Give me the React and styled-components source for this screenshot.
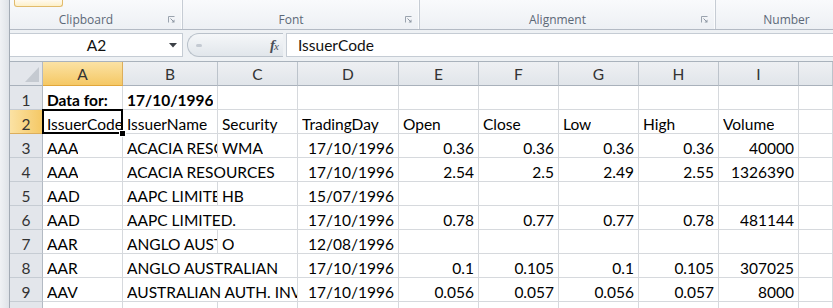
import React from "react";
import styled, { createGlobalStyle } from "styled-components";

const GlobalStyle = createGlobalStyle`
  html, body { margin: 0; padding: 0; background: #fff; }
  body { font-family: Lato, "Liberation Sans", sans-serif; }
`;

const Window = styled.div`
  width: 833px;
  height: 308px;
  overflow: hidden;
  display: flex;
  background: #e9ecf0;
`;

const Edge = styled.div`
  width: 9px;
  flex: none;
  background: linear-gradient(to right, #f0f2f5, #dfe3e8);
  border-right: 1px solid #a3abb5;
`;

const Main = styled.div`
  flex: 1;
  min-width: 0;
  display: flex;
  flex-direction: column;
`;

/* ribbon */
const Ribbon = styled.div`
  flex: none;
  height: 30px;
  box-sizing: border-box;
  display: flex;
  background: linear-gradient(#f9fafc, #edf0f4);
  border-bottom: 1px solid #b3bac4;
`;

const Group = styled.div`
  width: ${(p) => p.$w}px;
  flex: none;
  box-sizing: border-box;
  display: flex;
  flex-direction: column;
  border-right: 1px solid #c6ccd4;
  box-shadow: inset -1px 0 0 #fbfcfd;
`;

const GroupBody = styled.div`
  flex: 1;
  padding-left: 4px;
`;

const PasteTail = styled.div`
  width: 49px;
  height: 7px;
  box-sizing: border-box;
  border: 1px solid #e2bb6c;
  border-top: none;
  border-radius: 0 0 3px 3px;
  background: linear-gradient(#fffaf0, #fdf0c9);
`;

const LabelRow = styled.div`
  height: 16px;
  margin-bottom: 2px;
  display: flex;
  align-items: center;
`;

const GroupLabel = styled.div`
  flex: 1;
  text-align: center;
  font: 12px "Open Sans", sans-serif;
  color: #5c6877;
`;

const LauncherBox = styled.div`
  width: 20px;
  display: flex;
  justify-content: flex-end;
  padding-right: 7px;
  box-sizing: border-box;
`;

const Launcher = () => (
  <LauncherBox>
    <svg width="7" height="7" viewBox="0 0 7 7">
      <path d="M0.5 6.5V0.5H6.5" fill="none" stroke="#9aa3ae" />
      <path d="M2.5 2.5L5.5 5.5" stroke="#8d97a3" />
      <path d="M6.5 3.5V6.5H3.5Z" fill="#8d97a3" />
    </svg>
  </LauncherBox>
);

/* formula bar */
const FormulaBar = styled.div`
  flex: none;
  height: 32px;
  box-sizing: border-box;
  padding: 3px 0 4px;
  display: flex;
  background: #eef1f4;
  border-bottom: 1px solid #a9b2bc;
`;

const NameBox = styled.div`
  width: 173px;
  box-sizing: border-box;
  display: flex;
  align-items: center;
  background: #fff;
  border: 1px solid #c5ccd4;
  border-left: none;
`;

const NameText = styled.div`
  flex: 1;
  text-align: center;
  padding-left: 14px;
  font-size: 15.5px;
  color: #111;
`;

const DropArrow = styled.svg`
  margin-right: 5px;
`;

const Pill = styled.div`
  width: 96px;
  margin-left: 4px;
  box-sizing: border-box;
  display: flex;
  align-items: center;
  justify-content: space-between;
  padding: 0 5px 0 8px;
  border: 1px solid #b9c1ca;
  border-right: none;
  border-radius: 12px 0 0 12px;
  background: linear-gradient(#f5f7f9, #e1e6eb);
`;

const Handle = styled.span`
  width: 6px;
  height: 3px;
  border-radius: 2px;
  background: #c4cad2;
`;

const Fx = styled.span`
  font-family: "Liberation Serif", serif;
  font-style: italic;
  font-weight: bold;
  font-size: 15px;
  color: #4a4f57;
  letter-spacing: -1px;

  small {
    font-size: 11px;
    font-weight: normal;
  }
`;

const FormulaInput = styled.div`
  flex: 1;
  margin-left: 3px;
  box-sizing: border-box;
  display: flex;
  align-items: center;
  padding-left: 11px;
  background: #fff;
  border: 1px solid #c5ccd4;
  border-right: none;
  font-size: 15.5px;
  color: #111;
`;

/* sheet */
const Sheet = styled.div`
  flex: 1;
  min-height: 0;
  overflow: hidden;
  display: grid;
  grid-template-columns: 33px 80px 95px 80px 101px repeat(5, 80px) 1fr;
  grid-auto-rows: 24px;
  align-content: start;
  background: #fff;
  font-size: 15.5px;
`;

const Corner = styled.div`
  position: relative;
  box-sizing: border-box;
  background: #e3e6eb;
  border-right: 1px solid #b3bac3;
  border-bottom: 1px solid #a9b1bb;

  &::after {
    content: "";
    position: absolute;
    right: 3px;
    bottom: 3px;
    width: 0;
    height: 0;
    border-left: 14px solid transparent;
    border-bottom: 15px solid #c5cad1;
  }
`;

const ColHead = styled.div`
  box-sizing: border-box;
  display: flex;
  align-items: center;
  justify-content: center;
  padding-top: 1px;
  color: #333;
  background: ${(p) =>
    p.$active
      ? "linear-gradient(#fbe2a4, #f5c865)"
      : "linear-gradient(#eef0f3, #e1e5ea)"};
  border-right: 1px solid ${(p) => (p.$active ? "#dcae5c" : "#bcc3cb")};
  border-bottom: 1px solid ${(p) => (p.$active ? "#e1a63a" : "#a9b1bb")};
`;

const RowHead = styled.div`
  box-sizing: border-box;
  display: flex;
  align-items: center;
  justify-content: center;
  padding-top: 4px;
  color: #333;
  background: ${(p) =>
    p.$active ? "linear-gradient(to right, #fbe2a4, #f5c865)" : "#e3e6eb"};
  border-right: 1px solid ${(p) => (p.$active ? "#e1a63a" : "#b3bac3")};
  border-bottom: 1px solid ${(p) => (p.$active ? "#dcae5c" : "#c6ccd3")};
`;

const Cell = styled.div`
  grid-column: span ${(p) => p.$span || 1};
  position: ${(p) => (p.$selected ? "relative" : "static")};
  z-index: ${(p) => (p.$selected ? 2 : "auto")};
  min-width: 0;
  box-sizing: border-box;
  display: flex;
  align-items: center;
  justify-content: ${(p) => (p.$right ? "flex-end" : "flex-start")};
  padding: ${(p) => (p.$right ? "4px 4px 0 0" : "4px 0 0 4px")};
  font-weight: ${(p) => (p.$bold ? 700 : 400)};
  color: #000;
  border-right: 1px solid #d6d9dd;
  border-bottom: 1px solid #d6d9dd;

  &::after {
    content: ${(p) => (p.$selected ? '""' : "none")};
    position: absolute;
    left: -1px;
    top: -1px;
    right: -1px;
    bottom: -1px;
    border: 2px solid #000;
  }

  &::before {
    content: ${(p) => (p.$selected ? '""' : "none")};
    position: absolute;
    right: -4px;
    bottom: -4px;
    width: 5px;
    height: 5px;
    background: #000;
    border: 1px solid #fff;
    z-index: 1;
  }
`;

const CellText = styled.span`
  min-width: 0;
  overflow: hidden;
  white-space: nowrap;
`;

const txt = (t) => ({ t });
const num = (t) => ({ t, right: true });
const bold = (t) => ({ t, bold: true });
const wide = (t) => ({ t, span: 2 });
const blank = { t: "" };
const blanks = (n) => Array.from({ length: n }, () => blank);

const columns = ["A", "B", "C", "D", "E", "F", "G", "H", "I", ""];

const rows = [
  [bold("Data for:"), bold("17/10/1996"), ...blanks(8)],
  [
    { t: "IssuerCode", selected: true },
    txt("IssuerName"),
    txt("Security"),
    txt("TradingDay"),
    txt("Open"),
    txt("Close"),
    txt("Low"),
    txt("High"),
    txt("Volume"),
    blank,
  ],
  [txt("AAA"), txt("ACACIA RESOURCES"), txt("WMA"), num("17/10/1996"), num("0.36"), num("0.36"), num("0.36"), num("0.36"), num("40000"), blank],
  [txt("AAA"), wide("ACACIA RESOURCES"), num("17/10/1996"), num("2.54"), num("2.5"), num("2.49"), num("2.55"), num("1326390"), blank],
  [txt("AAD"), txt("AAPC LIMITED"), txt("HB"), num("15/07/1996"), ...blanks(6)],
  [txt("AAD"), wide("AAPC LIMITED."), num("17/10/1996"), num("0.78"), num("0.77"), num("0.77"), num("0.78"), num("481144"), blank],
  [txt("AAR"), txt("ANGLO AUSTRALIAN"), txt("O"), num("12/08/1996"), ...blanks(6)],
  [txt("AAR"), wide("ANGLO AUSTRALIAN"), num("17/10/1996"), num("0.1"), num("0.105"), num("0.1"), num("0.105"), num("307025"), blank],
  [txt("AAV"), wide("AUSTRALIAN AUTH. INVESTMENTS"), num("17/10/1996"), num("0.056"), num("0.057"), num("0.056"), num("0.057"), num("8000"), blank],
  blanks(10),
];

const App = () => {
  return (
    <Window>
      <GlobalStyle />
      <Edge />
      <Main>
        <Ribbon>
          <Group $w={173}>
            <GroupBody>
              <PasteTail />
            </GroupBody>
            <LabelRow>
              <GroupLabel>Clipboard</GroupLabel>
              <Launcher />
            </LabelRow>
          </Group>
          <Group $w={237}>
            <GroupBody />
            <LabelRow>
              <GroupLabel>Font</GroupLabel>
              <Launcher />
            </LabelRow>
          </Group>
          <Group $w={296}>
            <GroupBody />
            <LabelRow>
              <GroupLabel>Alignment</GroupLabel>
              <Launcher />
            </LabelRow>
          </Group>
          <Group $w={162}>
            <GroupBody />
            <LabelRow>
              <GroupLabel>Number</GroupLabel>
              <LauncherBox />
            </LabelRow>
          </Group>
        </Ribbon>

        <FormulaBar>
          <NameBox>
            <NameText>A2</NameText>
            <DropArrow width="8" height="5" viewBox="0 0 8 5">
              <path d="M0 0H8L4 4.5Z" fill="#3c4046" />
            </DropArrow>
          </NameBox>
          <Pill>
            <Handle />
            <Fx>
              f<small>x</small>
            </Fx>
          </Pill>
          <FormulaInput>IssuerCode</FormulaInput>
        </FormulaBar>

        <Sheet>
          <Corner />
          {columns.map((c, i) => (
            <ColHead key={"h" + i} $active={c === "A"}>
              {c}
            </ColHead>
          ))}
          {rows.map((row, r) => (
            <React.Fragment key={r}>
              <RowHead $active={r === 1}>{r + 1}</RowHead>
              {row.map((cell, c) => (
                <Cell
                  key={c}
                  $span={cell.span}
                  $right={cell.right}
                  $bold={cell.bold}
                  $selected={cell.selected}
                >
                  <CellText>{cell.t}</CellText>
                </Cell>
              ))}
            </React.Fragment>
          ))}
        </Sheet>
      </Main>
    </Window>
  );
};

export default App;
